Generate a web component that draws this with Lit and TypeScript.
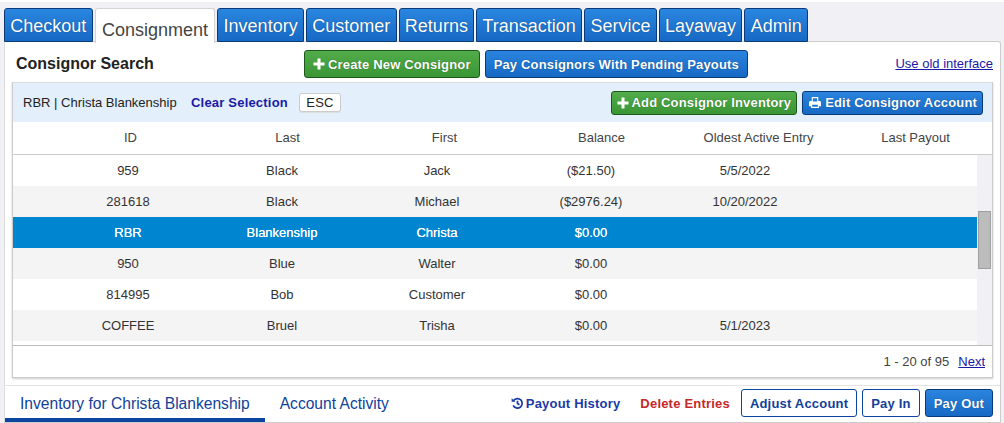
import { LitElement, html, css, svg } from "lit";
import { customElement } from "lit/decorators.js";

const TABS = ["Checkout", "Consignment", "Inventory", "Customer", "Returns", "Transaction", "Service", "Layaway", "Admin"];
const ROWS = [
  ["959", "Black", "Jack", "($21.50)", "5/5/2022", ""],
  ["281618", "Black", "Michael", "($2976.24)", "10/20/2022", ""],
  ["RBR", "Blankenship", "Christa", "$0.00", "", ""],
  ["950", "Blue", "Walter", "$0.00", "", ""],
  ["814995", "Bob", "Customer", "$0.00", "", ""],
  ["COFFEE", "Bruel", "Trisha", "$0.00", "5/1/2023", ""],
];
const plus = svg`<path d="M4.5 .5h3v4h4v3h-4v4h-3v-4H.5v-3h4z" fill="currentColor"/>`;

@customElement("app-root")
export class AppRoot extends LitElement {
  static styles = css`
    :host { display: block; width: 1004px; height: 423px; overflow: hidden; background: #f0f0f5; font-family: "Liberation Sans", Arial, sans-serif; color: #222; box-sizing: border-box; }
    * { box-sizing: border-box; }
    .topline { height: 2px; background: #fff; }
    .tabs { display: flex; gap: 2px; padding: 6px 0 0 4px; height: 40px; position: relative; z-index: 1; }
    .tab { height: 34px; padding: 0 5.3px; border: 1px solid #0b3a78; border-radius: 3px 3px 0 0; background: linear-gradient(#2a86e0, #1669c4); color: #fff; font-size: 18px; line-height: 34px; text-shadow: 0 0 1px #0b3a78; }
    .tab.active { background: #fff; color: #444; border: 1px solid #d4d4d4; border-bottom: 0; padding: 4px 6.3px 0; text-shadow: none; height: 35px; }
    .card { margin: -1px 3px 0 4px; height: 382px; background: #fff; border: 1px solid #ccc; border-left-color: #ddd; border-radius: 0 3px 0 0; display: flex; flex-direction: column; }
    .head { display: flex; align-items: center; height: 40px; padding: 4px 7px 0 11px; flex: none; }
    .title { font-size: 16px; font-weight: 700; width: 288px; color: #222; margin-top: -1px; }
    .btn { display: inline-flex; align-items: center; gap: 3px; height: 28px; padding: 0 8px; border-radius: 3px; border: 1px solid #0b3a78; background: linear-gradient(#2a84dd, #1669c4); color: #fff; font-weight: 700; font-size: 13px; letter-spacing: .16px; white-space: nowrap; text-shadow: 0 0 1px #0b3a78; }
    .btn.green { background: linear-gradient(#52ac4a, #3a9535); border-color: #1f5a1d; text-shadow: 0 0 1px #1f5a1d; }
    .btn svg { width: 12px; height: 12px; flex: none; }
    .btn svg.print { width: 14px; height: 13px; }
    .head .btn + .btn { margin-left: 5px; }
    .old { margin-left: auto; color: #1a1aa6; text-decoration: underline; font-size: 13px; margin-top: -2px; }
    .panel { margin: 0 7px; height: 296px; border: 1px solid #ccc; border-top-color: #ddd; box-shadow: 0 1px 2px #ccc; display: flex; flex-direction: column; flex: none; }
    .sel { height: 39px; background: #e3f0fb; display: flex; align-items: center; padding: 0 9px 0 10px; flex: none; font-size: 13px; }
    .sel .name { color: #222; width: 168px; }
    .clear { color: #1a1aa6; font-weight: 700; font-size: 13px; letter-spacing: .2px; width: 108px; }
    .esc { height: 19px; width: 42px; border: 1px solid #ccc; border-radius: 3px; background: #fff; text-align: center; line-height: 17px; font-size: 13px; letter-spacing: .3px; box-shadow: 0 1px 1px #ddd; }
    .sel .btn { height: 24px; padding: 0 5px; }
    .sel .btn.green { margin-left: auto; }
    .sel .btn + .btn { margin-left: 5px; }
    .thead { display: grid; grid-template-columns: repeat(6, 157px); padding: 0 0 2px 39px; height: 33px; align-items: center; text-align: center; border-bottom: 1px solid #ccc; font-size: 13px; color: #444; flex: none; }
    .body { display: flex; height: 191px; flex: none; border-bottom: 1px solid #bbb; overflow: hidden; }
    .rows { width: 964px; flex: none; }
    .row { display: grid; grid-template-columns: 156px 152px 158px 150px 158px 1fr; padding-left: 37px; height: 31px; align-items: center; text-align: center; font-size: 13px; color: #333; }
    .row:nth-child(even) { background: #f4f4f4; }
    .row.on, .row.on:nth-child(even) { background: #0085d0; color: #fff; text-shadow: 0 0 .6px #fff; }
    .sb { flex: 1; background: #f0f0f5; position: relative; }
    .thumb { position: absolute; left: 1px; right: 1px; top: 56px; height: 58px; background: #bcbcbc; border: 1px solid #a0a0a0; }
    .pager { display: flex; justify-content: flex-end; align-items: center; gap: 9px; padding-right: 7px; flex: 1; font-size: 13px; color: #444; }
    .pager a { color: #1a1aa6; text-decoration: underline; }
    .foot { margin-top: 7px; border-top: 1px solid #e4e4e4; flex: 1; display: flex; align-items: stretch; }
    .sub { font-size: 15.6px; color: #123f99; padding: 9px 15px 0; border-bottom: 4px solid #0b45a0; }
    .sub.off { border-bottom: 0; }
    .foot .right { margin-left: auto; display: flex; align-items: center; gap: 5px; padding: 0 7px 2px 0; font-size: 13px; font-weight: 700; letter-spacing: .2px; }
    .hist { color: #1a3aa6; display: flex; align-items: center; gap: 2px; margin-right: 15px; }
    .hist svg { width: 13px; height: 13px; }
    .del { color: #c62828; margin-right: 6px; }
    .out { height: 28px; padding: 0 8px; border: 1px solid #0b45a0; border-radius: 3px; background: #fff; color: #123f99; display: inline-flex; align-items: center; }
  `;

  render() {
    return html`
      <div class="topline"></div>
      <div class="tabs">${TABS.map((t, i) => html`<div class="tab ${i === 1 ? "active" : ""}">${t}</div>`)}</div>
      <div class="card">
        <div class="head">
          <div class="title">Consignor Search</div>
          <div class="btn green"><svg viewBox="0 0 12 12">${plus}</svg>Create New Consignor</div>
          <div class="btn">Pay Consignors With Pending Payouts</div>
          <a class="old">Use old interface</a>
        </div>
        <div class="panel">
          <div class="sel">
            <div class="name">RBR | Christa Blankenship</div>
            <div class="clear">Clear Selection</div>
            <div class="esc">ESC</div>
            <div class="btn green"><svg viewBox="0 0 12 12">${plus}</svg>Add Consignor Inventory</div>
            <div class="btn"><svg class="print" viewBox="0 0 12 12"><path fill="currentColor" fill-rule="evenodd" d="M3 1h6v3.500h1.200c.7 0 1.300.6 1.300 1.300V9.500H9.600V11H2.400V9.500H.5V5.800c0-.7.6-1.300 1.300-1.300H3zM4 2v3h4V2zM3.400 8v2h5.200V8z"/></svg>Edit Consignor Account</div>
          </div>
          <div class="thead"><span>ID</span><span>Last</span><span>First</span><span>Balance</span><span>Oldest Active Entry</span><span>Last Payout</span></div>
          <div class="body">
            <div class="rows">
              ${ROWS.map((r) => html`<div class="row ${r[0] === "RBR" ? "on" : ""}">${r.map((c) => html`<span>${c}</span>`)}</div>`)}
            </div>
            <div class="sb"><div class="thumb"></div></div>
          </div>
          <div class="pager"><span>1 - 20 of 95</span><a>Next</a></div>
        </div>
        <div class="foot">
          <div class="sub">Inventory for Christa Blankenship</div>
          <div class="sub off">Account Activity</div>
          <div class="right">
            <span class="hist"><svg viewBox="0 0 12 12"><path fill="none" stroke="currentColor" stroke-width="1.600" d="M2.400 3.200A4.400 4.400 0 1 1 2 7.800M6 3.500V6l1.800 1.200"/><path fill="currentColor" d="M.6 1.200l3.600 3.200H.6z"/></svg>Payout History</span>
            <span class="del">Delete Entries</span>
            <span class="out">Adjust Account</span>
            <span class="out">Pay In</span>
            <span class="btn">Pay Out</span>
          </div>
        </div>
      </div>
    `;
  }
}
